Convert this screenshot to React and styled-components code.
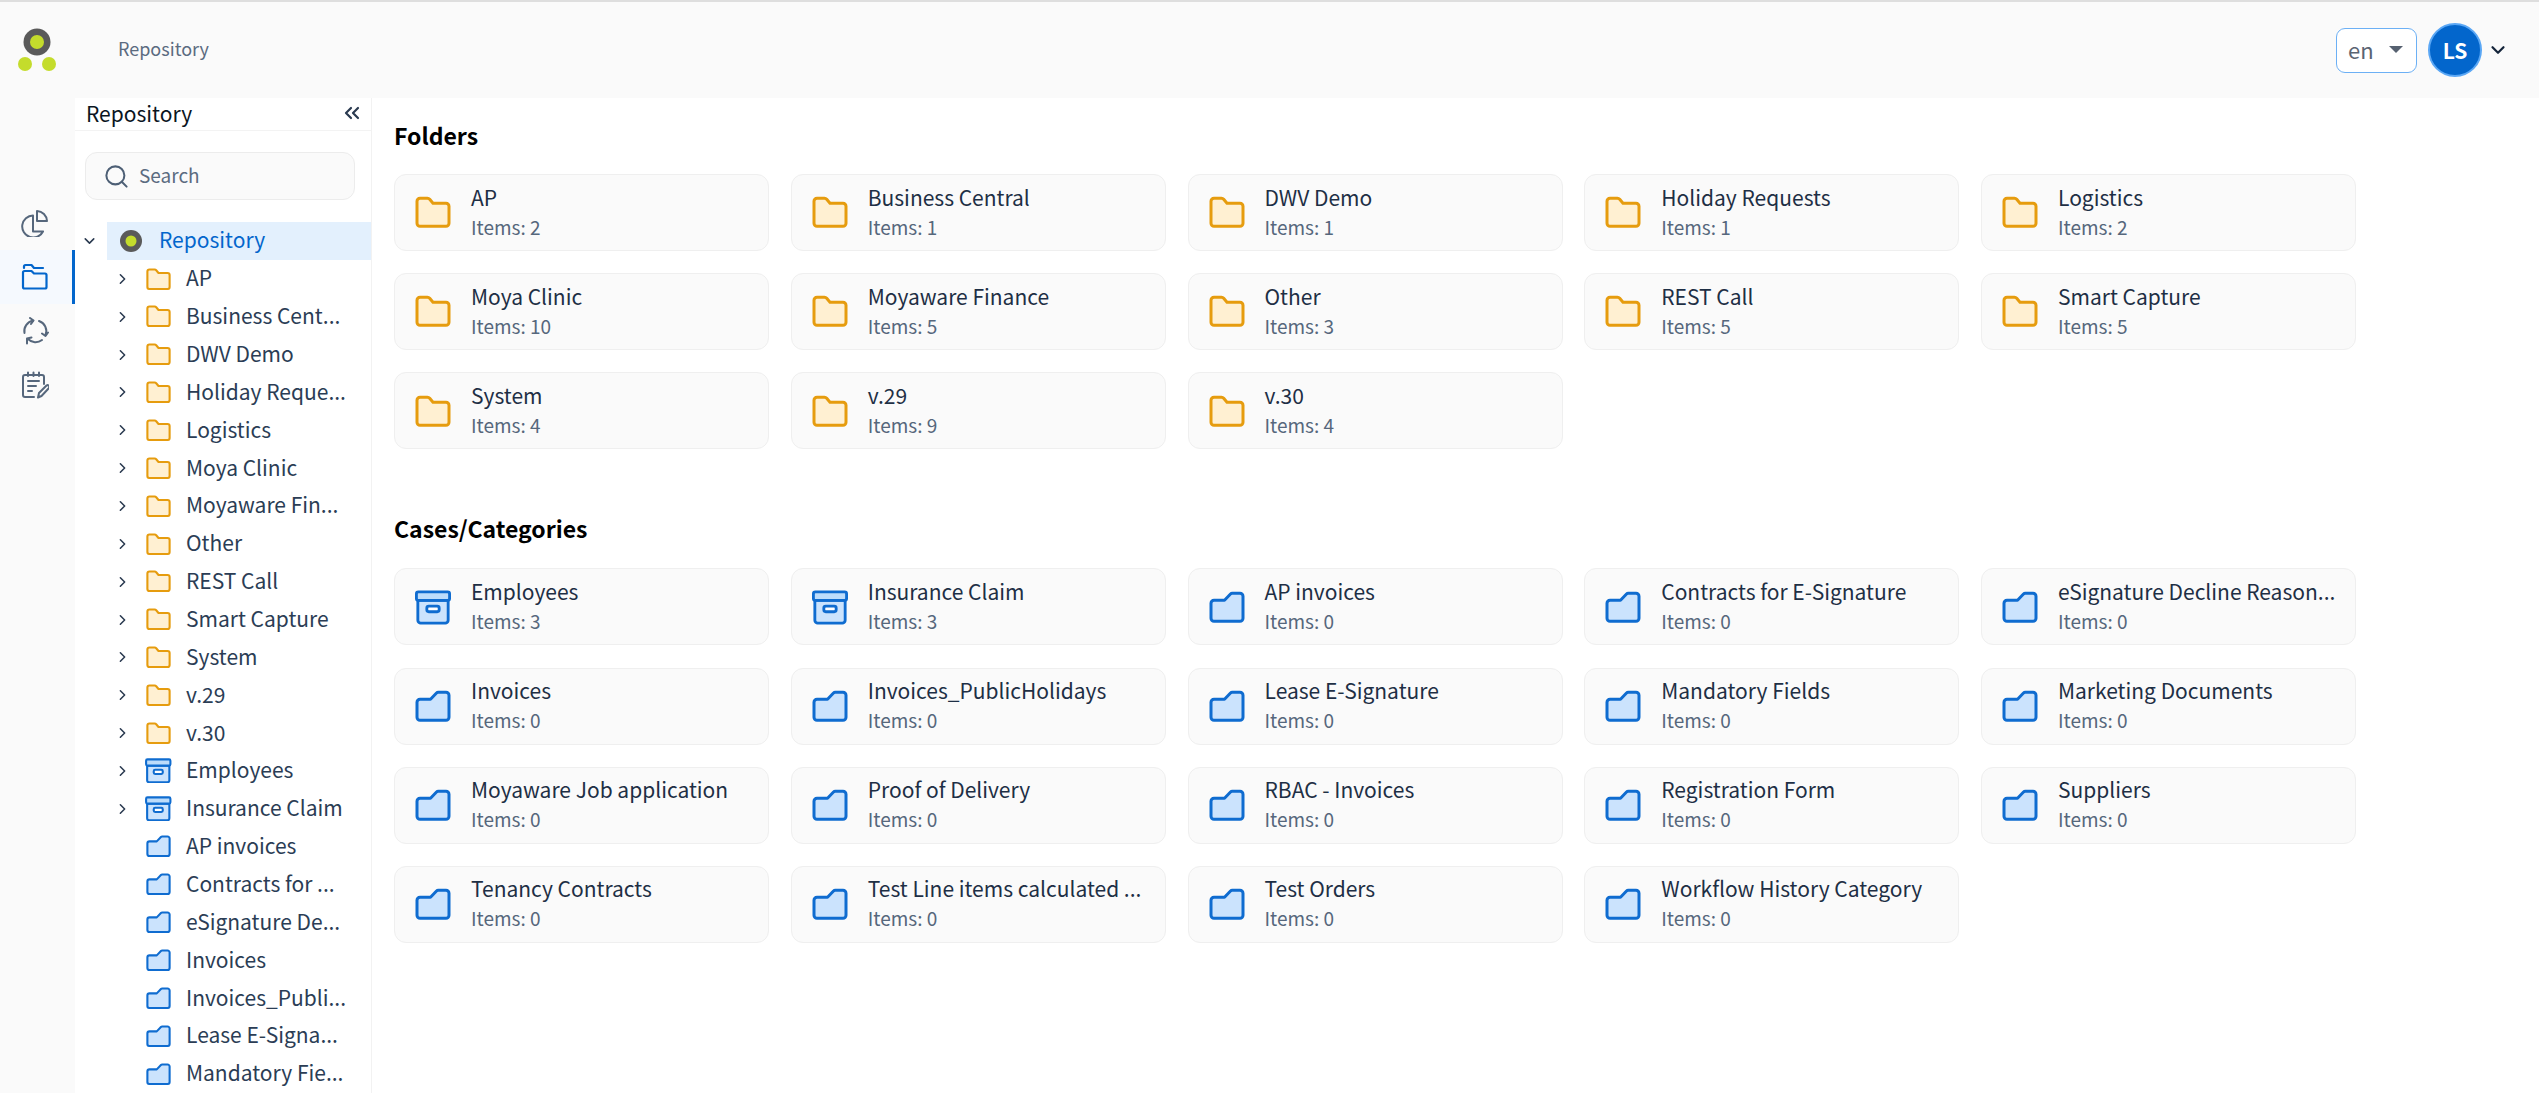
import React from 'react'
import styled, { createGlobalStyle } from 'styled-components'
import { ChevronRight, ChevronDown, ChevronsLeft, Search as SearchIcon } from 'lucide-react'

const Global = createGlobalStyle`
  html, body { margin: 0; padding: 0; height: 100%; overflow: hidden; background: #fff; }
  body { font-family: "Noto Sans CJK SC", "Noto Sans", sans-serif; color: #1e2f45; }
  * { box-sizing: border-box; }
`

const Page = styled.div`
  height: 1093px;
  display: grid;
  grid-template-columns: 75px 1fr;
  grid-template-rows: 96px 1fr;
  border-top: 2px solid #dedede;
  overflow: hidden;
`
const TopBar = styled.header`
  grid-column: 1 / 3;
  display: flex;
  align-items: center;
  background: #fafafa;
  padding: 0 30px 0 0;
`
const LogoBox = styled.div`
  width: 118px;
  padding: 0 0 0 18px;
  display: flex;
`
const TopTitle = styled.div`
  font-size: 18px;
  color: #5b6b80;
  flex: 1;
  padding-bottom: 5px;
`
const LangBox = styled.div`
  width: 81px;
  height: 45px;
  border: 1px solid #6cb0f5;
  border-radius: 9px;
  background: #fff;
  display: flex;
  align-items: center;
  justify-content: space-between;
  padding: 0 13px 2px 11px;
  font-size: 22px;
  color: #5a6472;
  margin-right: 11px;
`
const Caret = styled.span`
  width: 0;
  height: 0;
  border-left: 7px solid transparent;
  border-right: 7px solid transparent;
  border-top: 7px solid #566170;
`
const Avatar = styled.div`
  width: 54px;
  height: 54px;
  border-radius: 50%;
  background: #0366cc;
  border: 2px solid #5aa7f5;
  color: #fff;
  font-weight: 700;
  font-size: 21px;
  display: flex;
  align-items: center;
  justify-content: center;
`
const UserChevron = styled(ChevronDown)`
  width: 22px;
  height: 22px;
  margin-left: 5px;
  color: #14243a;
`
const Rail = styled.nav`
  background: #fafafa;
  padding-top: 98px;
  display: flex;
  flex-direction: column;
`
const RailItem = styled.div`
  height: 54px;
  display: flex;
  align-items: center;
  justify-content: center;
  padding-right: 2px;
  color: ${p => (p.$active ? '#0366cc' : '#56677c')};
  background: ${p => (p.$active ? '#f5f9fe' : 'transparent')};
  border-right: 3px solid ${p => (p.$active ? '#0366cc' : 'transparent')};
`
const Body = styled.div`
  display: flex;
  min-height: 0;
  overflow: hidden;
`
const Side = styled.aside`
  width: 297px;
  flex: none;
  border-right: 1px solid #f2f2f2;
  display: flex;
  flex-direction: column;
  overflow: hidden;
`
const SideHead = styled.div`
  height: 33px;
  flex: none;
  display: flex;
  align-items: center;
  justify-content: space-between;
  padding: 0 7px 3px 11px;
  border-bottom: 1px solid #f3f3f3;
  font-size: 21px;
  color: #0a1522;
`
const Search = styled.div`
  margin: 21px 16px 0 10px;
  height: 48px;
  flex: none;
  background: #fafafa;
  border: 1px solid #ececec;
  border-radius: 12px;
  display: flex;
  align-items: center;
  gap: 9px;
  padding: 0 17px;
  font-size: 19px;
  color: #5b6b80;
`
const SearchText = styled.span`
  padding-bottom: 3px;
`
const Tree = styled.div`
  margin-top: 22px;
  display: flex;
  flex-direction: column;
`
const Row = styled.div`
  height: 37.86px;
  flex: none;
  display: flex;
  align-items: center;
  font-size: 21px;
  color: #2b3d55;
`
const RootRow = styled(Row)`
  color: #0366cc;
`
const RootLabel = styled.div`
  flex: 1;
  height: 38px;
  margin-left: 9px;
  background: #e3f0fd;
  display: flex;
  align-items: center;
  gap: 17px;
  padding-left: 13px;
`
const RootText = styled.span`
  padding-bottom: 3px;
`
const Twist = styled.span`
  width: 17px;
  margin-left: ${p => p.$left}px;
  flex: none;
  display: flex;
  justify-content: center;
  color: #2a3a50;
`
const TreeIcon = styled.span`
  width: 27px;
  margin-left: 14px;
  flex: none;
  display: flex;
  justify-content: center;
`
const Label = styled.span`
  margin-left: 14px;
  padding-bottom: 3px;
  white-space: nowrap;
`
const Main = styled.main`
  flex: 1;
  padding: 22px 0 0 22px;
`
const Heading = styled.h2`
  margin: 0;
  height: 30px;
  line-height: 30px;
  font-size: 23px;
  font-weight: 700;
  color: #000;
`
const Cards = styled.div`
  margin-top: ${p => p.$top}px;
  display: grid;
  grid-template-columns: repeat(5, 375px);
  grid-auto-rows: 77px;
  column-gap: 21.75px;
  row-gap: 22.2px;
`
const Card = styled.div`
  background: #fafafa;
  border: 1px solid #efefef;
  border-radius: 12px;
  display: flex;
  align-items: center;
  padding: 0 20px;
  min-width: 0;
`
const CardIcon = styled.div`
  width: 36px;
  flex: none;
  margin-right: 20px;
  display: flex;
  justify-content: center;
`
const CardText = styled.div`
  min-width: 0;
  flex: 1;
  padding-bottom: 1px;
`
const CardName = styled.div`
  font-size: 21px;
  line-height: 28px;
  color: #1e2f45;
  white-space: nowrap;
`
const CardCount = styled.div`
  font-size: 19px;
  line-height: 31px;
  color: #56677c;
`
const CasesBlock = styled.section`
  margin-top: 64px;
`

const Logo = () => (
  <svg width="40" height="44" viewBox="0 0 40 44">
    <circle cx="19" cy="14" r="13.5" fill="#5a5a5a" />
    <circle cx="19" cy="14" r="7" fill="#c4dc2c" />
    <circle cx="7" cy="36" r="7" fill="#c4dc2c" />
    <circle cx="31" cy="36" r="7" fill="#c4dc2c" />
  </svg>
)
const RootIcon = () => (
  <svg width="22" height="24" viewBox="0 0 22 22">
    <circle cx="11" cy="11" r="11" fill="#5a5a5a" />
    <circle cx="11" cy="11" r="5.5" fill="#c4dc2c" />
  </svg>
)
const PieIcon = () => (
  <svg width="28" height="28" viewBox="0 0 28 28" fill="none" stroke="currentColor" strokeWidth="2" strokeLinejoin="round">
    <path d="M12 6.500a11 11 0 1 0 10 16H12z" />
    <path d="M16 2a10.500 10.500 0 0 1 10 10H16z" />
  </svg>
)
const FoldersIcon = () => (
  <svg width="28" height="28" viewBox="0 0 28 28" fill="none" stroke="currentColor" strokeWidth="2.2" strokeLinejoin="round" strokeLinecap="round">
    <path d="M3 5V3.500A1.500 1.500 0 0 1 4.500 2h6l2.500 3h9" />
    <path d="M2 9.500A1.500 1.500 0 0 1 3.500 8h7l2.500 2.500h11A1.500 1.500 0 0 1 25.500 12v12a1.500 1.500 0 0 1-1.500 1.500H3.500A1.500 1.500 0 0 1 2 24z" />
  </svg>
)
const SyncIcon = () => (
  <svg width="28" height="28" viewBox="0 0 28 28" fill="none" stroke="currentColor" strokeWidth="2" strokeLinecap="round" strokeLinejoin="round">
    <path d="M3.500 16A10.500 10.500 0 0 1 12 3.700" />
    <path d="M9 1l3.500 2.500L10 7" />
    <path d="M18 4a10.500 10.500 0 0 1 6.500 14" />
    <path d="M27 15.500l-2.500 3.500-3.500-2.500" />
    <path d="M21 23a10.500 10.500 0 0 1-14-1" />
    <path d="M6 26.500V21.500l4.500-1" />
  </svg>
)
const NotesIcon = () => (
  <svg width="28" height="28" viewBox="0 0 28 28" fill="none" stroke="currentColor" strokeWidth="2" strokeLinecap="round" strokeLinejoin="round">
    <path d="M13 26H4a2 2 0 0 1-2-2V6a2 2 0 0 1 2-2h17a2 2 0 0 1 2 2v7" />
    <path d="M7 1.500V5M12.500 1.500V5M18 1.500V5" />
    <path d="M7 10h11M7 15h8M7 20h4" />
    <path d="M17 26.500l1-4.500 7.500-7.500a1.800 1.800 0 0 1 2.500 2.500L20.500 25z" />
  </svg>
)
const FolderClosed = ({ size, stroke, fill }) => (
  <svg width={size} height={size * 0.9} viewBox="0 0 36 32" fill={fill} stroke={stroke} strokeWidth="3" strokeLinejoin="round">
    <path d="M2 5a3 3 0 0 1 3-3h7.500a3 3 0 0 1 2.200 1l3.300 4h13a3 3 0 0 1 3 3v17a3 3 0 0 1-3 3H5a3 3 0 0 1-3-3z" />
  </svg>
)
const FolderCase = ({ size, stroke, fill }) => (
  <svg width={size} height={size * 0.9} viewBox="0 0 36 32" fill={fill} stroke={stroke} strokeWidth="3" strokeLinejoin="round">
    <path d="M2 12a3 3 0 0 1 3-3h10.500l6-6.200a2.500 2.500 0 0 1 1.800-.8H31a3 3 0 0 1 3 3v22a3 3 0 0 1-3 3H5a3 3 0 0 1-3-3z" />
  </svg>
)
const ArchiveBox = ({ size, stroke, fill }) => (
  <svg width={size * 1.06} height={size} viewBox="0 0 38 36" fill={fill} stroke={stroke} strokeWidth="3" strokeLinejoin="round">
    <path d="M3 11h32v21a3 3 0 0 1-3 3H6a3 3 0 0 1-3-3z" />
    <rect x="1.500" y="2" width="35" height="9" rx="2" fill="#bcdcfb" />
    <rect x="12.500" y="17" width="13" height="6" rx="2" fill="#fff" />
  </svg>
)

const kinds = {
  folder: { Icon: FolderClosed, stroke: '#e69c0e', fill: '#fff0d2' },
  box: { Icon: ArchiveBox, stroke: '#0f6cd0', fill: '#cbe3fd' },
  cat: { Icon: FolderCase, stroke: '#0f6cd0', fill: '#cbe3fd' },
}

const folders = [
  ['AP', 2], ['Business Central', 1], ['DWV Demo', 1], ['Holiday Requests', 1], ['Logistics', 2],
  ['Moya Clinic', 10], ['Moyaware Finance', 5], ['Other', 3], ['REST Call', 5], ['Smart Capture', 5],
  ['System', 4], ['v.29', 9], ['v.30', 4],
]
const boxes = [['Employees', 3], ['Insurance Claim', 3]]
const cats = [
  ['AP invoices', 0], ['Contracts for E-Signature', 0], ['eSignature Decline Reason...', 0],
  ['Invoices', 0], ['Invoices_PublicHolidays', 0], ['Lease E-Signature', 0], ['Mandatory Fields', 0], ['Marketing Documents', 0],
  ['Moyaware Job application', 0], ['Proof of Delivery', 0], ['RBAC - Invoices', 0], ['Registration Form', 0], ['Suppliers', 0],
  ['Tenancy Contracts', 0], ['Test Line items calculated ...', 0], ['Test Orders', 0], ['Workflow History Category', 0],
]

const treeRows = [
  ['AP', 'folder', true], ['Business Cent...', 'folder', true], ['DWV Demo', 'folder', true],
  ['Holiday Reque...', 'folder', true], ['Logistics', 'folder', true], ['Moya Clinic', 'folder', true],
  ['Moyaware Fin...', 'folder', true], ['Other', 'folder', true], ['REST Call', 'folder', true],
  ['Smart Capture', 'folder', true], ['System', 'folder', true], ['v.29', 'folder', true], ['v.30', 'folder', true],
  ['Employees', 'box', true], ['Insurance Claim', 'box', true],
  ['AP invoices', 'cat', false], ['Contracts for ...', 'cat', false], ['eSignature De...', 'cat', false],
  ['Invoices', 'cat', false], ['Invoices_Publi...', 'cat', false], ['Lease E-Signa...', 'cat', false], ['Mandatory Fie...', 'cat', false],
]

const ItemCard = ({ name, count, kind }) => {
  const { Icon, stroke, fill } = kinds[kind]
  return (
    <Card>
      <CardIcon>
        <Icon size={36} stroke={stroke} fill={fill} />
      </CardIcon>
      <CardText>
        <CardName>{name}</CardName>
        <CardCount>Items: {count}</CardCount>
      </CardText>
    </Card>
  )
}

const TreeRow = ({ name, kind, expandable }) => {
  const { Icon, stroke, fill } = kinds[kind]
  return (
    <Row>
      <Twist $left={39}>{expandable && <ChevronRight size={20} strokeWidth={2.2} />}</Twist>
      <TreeIcon>
        <Icon size={25} stroke={stroke} fill={fill} />
      </TreeIcon>
      <Label>{name}</Label>
    </Row>
  )
}

const App = () => (
  <Page>
    <Global />
    <TopBar>
      <LogoBox><Logo /></LogoBox>
      <TopTitle>Repository</TopTitle>
      <LangBox>en<Caret /></LangBox>
      <Avatar>LS</Avatar>
      <UserChevron strokeWidth={2.4} />
    </TopBar>
    <Rail>
      <RailItem><PieIcon /></RailItem>
      <RailItem $active><FoldersIcon /></RailItem>
      <RailItem><SyncIcon /></RailItem>
      <RailItem><NotesIcon /></RailItem>
    </Rail>
    <Body>
      <Side>
        <SideHead>
          Repository
          <ChevronsLeft size={24} strokeWidth={2.2} color="#2a3a50" />
        </SideHead>
        <Search>
          <SearchIcon size={27} strokeWidth={1.8} color="#4d5f75" />
          <SearchText>Search</SearchText>
        </Search>
        <Tree>
          <RootRow>
            <Twist $left={6}><ChevronDown size={20} strokeWidth={2.2} /></Twist>
            <RootLabel><RootIcon /><RootText>Repository</RootText></RootLabel>
          </RootRow>
          {treeRows.map(([n, k, e]) => <TreeRow key={n} name={n} kind={k} expandable={e} />)}
        </Tree>
      </Side>
      <Main>
        <Heading>Folders</Heading>
        <Cards $top={24}>
          {folders.map(([n, c]) => <ItemCard key={n} name={n} count={c} kind="folder" />)}
        </Cards>
        <CasesBlock>
          <Heading>Cases/Categories</Heading>
          <Cards $top={25}>
            {boxes.map(([n, c]) => <ItemCard key={n} name={n} count={c} kind="box" />)}
            {cats.map(([n, c]) => <ItemCard key={n} name={n} count={c} kind="cat" />)}
          </Cards>
        </CasesBlock>
      </Main>
    </Body>
  </Page>
)

export default App
